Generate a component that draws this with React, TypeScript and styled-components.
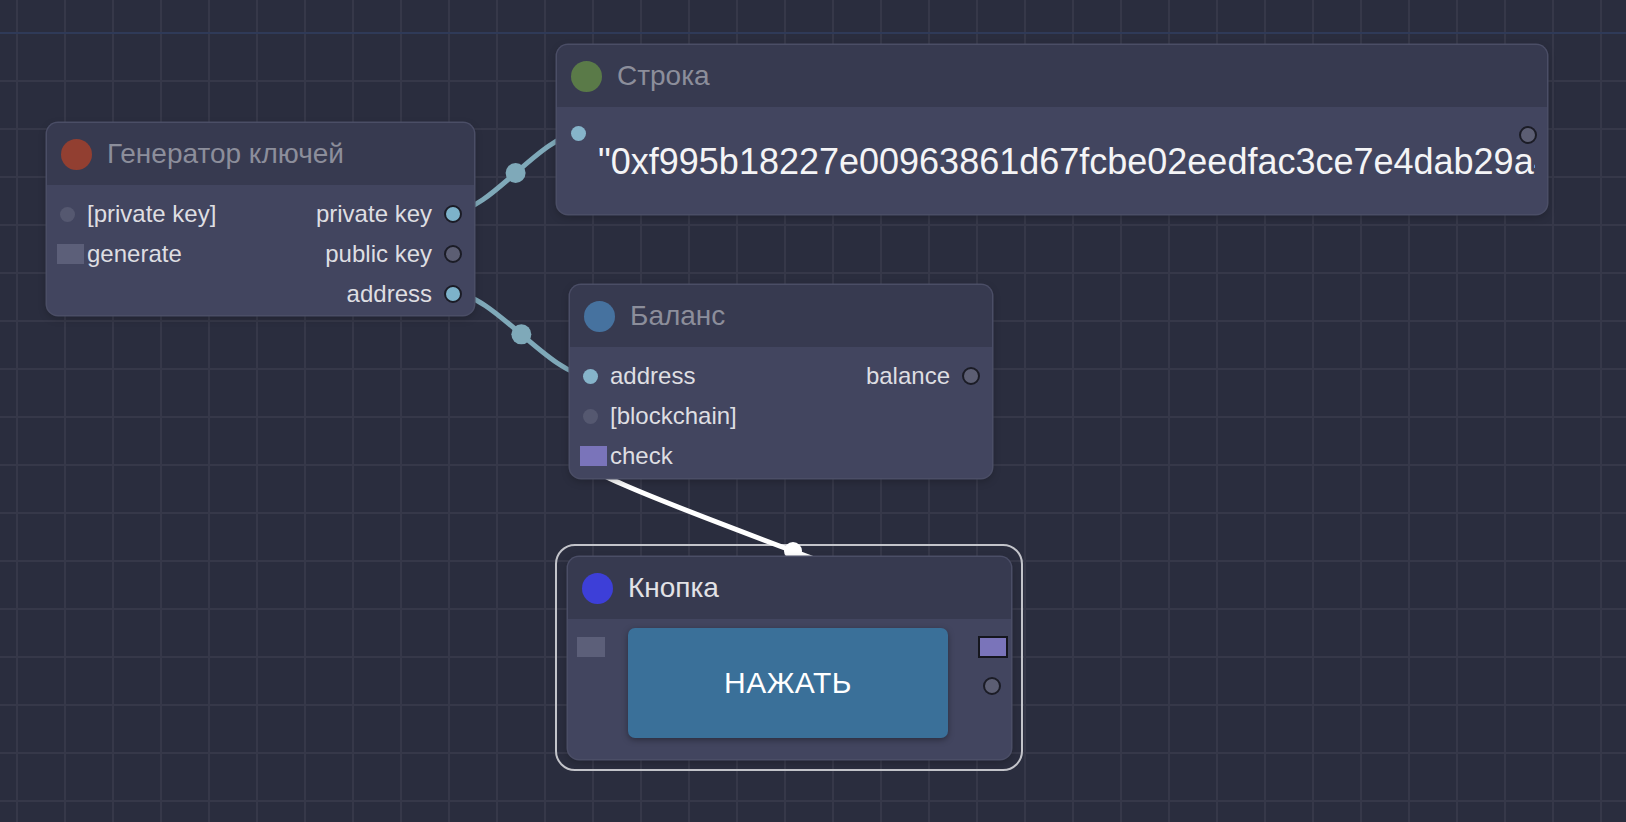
import React from "react";
import styled, { createGlobalStyle } from "styled-components";

const Global = createGlobalStyle`
  html, body { margin: 0; padding: 0; background: #2a2d3e; overflow: hidden; }
  body { font-family: "Liberation Sans", Arial, sans-serif; }
`;

const Canvas = styled.div`
  position: relative;
  width: 1626px;
  height: 822px;
  overflow: hidden;
  background-color: #2a2d3e;
  background-image:
    linear-gradient(#2f3a58, #2f3a58),
    linear-gradient(to right, #363849 0 2px, transparent 2px),
    linear-gradient(to bottom, #363849 0 2px, transparent 2px);
  background-size: 100% 2px, 48px 48px, 48px 48px;
  background-repeat: no-repeat, repeat, repeat;
  background-position: 0 32px, 16px 0, 0 32px;
`;

const LinkLayer = styled.svg`
  position: absolute;
  left: 0;
  top: 0;
  width: 1626px;
  height: 822px;
  z-index: 1;
  pointer-events: none;
`;

const SelectionFrame = styled.div<{ $x: number; $y: number; $w: number; $h: number }>`
  position: absolute;
  left: ${(p) => p.$x}px;
  top: ${(p) => p.$y}px;
  width: ${(p) => p.$w}px;
  height: ${(p) => p.$h}px;
  box-sizing: border-box;
  border: 2px solid #c3c4ca;
  border-radius: 20px;
  z-index: 0;
`;

const NodeBox = styled.div<{ $x: number; $y: number; $w: number }>`
  position: absolute;
  left: ${(p) => p.$x}px;
  top: ${(p) => p.$y}px;
  width: ${(p) => p.$w}px;
  z-index: 2;
  display: flex;
  flex-direction: column;
  border-radius: 11px;
  background: #42455f;
  box-shadow: 0 0 0 1.5px #4b4e66, 0 3px 8px rgba(0, 0, 0, 0.25);
  overflow: hidden;
`;

const Header = styled.div`
  height: 62px;
  flex: none;
  display: flex;
  align-items: center;
  gap: 15px;
  padding-left: 14px;
  background: #373a50;
`;

const HeadDot = styled.span<{ $c: string }>`
  width: 31px;
  height: 31px;
  border-radius: 50%;
  background: ${(p) => p.$c};
  flex: none;
`;

const Title = styled.span<{ $active?: boolean }>`
  font-size: 28px;
  color: ${(p) => (p.$active ? "#e2e2e6" : "#8c8e9b")};
  white-space: nowrap;
`;

const SlotBody = styled.div<{ $h: number }>`
  height: ${(p) => p.$h}px;
  box-sizing: border-box;
  padding-top: 9px;
  display: flex;
  flex-direction: column;
`;

const Row = styled.div`
  height: 40px;
  display: flex;
  align-items: center;
`;

const InSlot = styled.span`
  width: 30px;
  margin-left: 10px;
  display: flex;
  align-items: center;
  flex: none;
`;

const InDot = styled.span<{ $on?: boolean }>`
  width: 15px;
  height: 15px;
  border-radius: 50%;
  margin-left: 3px;
  background: ${(p) => (p.$on ? "#86b4ca" : "#555870")};
`;

const InSquare = styled.span<{ $c?: string }>`
  width: 27px;
  height: 20px;
  background: ${(p) => p.$c || "#5c5f79"};
`;

const Label = styled.span`
  font-size: 24px;
  color: #dedee2;
  white-space: nowrap;
`;

const Spacer = styled.span`
  flex: 1;
`;

const OutLabel = styled(Label)`
  margin-right: 12px;
`;

const OutDot = styled.span<{ $on?: boolean }>`
  width: 14px;
  height: 14px;
  border-radius: 50%;
  border: 2px solid #1b1c26;
  background: ${(p) => (p.$on ? "#7db2ca" : "#5c5e73")};
  margin-right: 12px;
  flex: none;
`;

/* ---- String node ---- */
const StringBody = styled.div`
  height: 107px;
  box-sizing: border-box;
  padding-top: 19px;
  display: flex;
  align-items: flex-start;
`;

const StringIn = styled.span`
  width: 15px;
  height: 15px;
  border-radius: 50%;
  background: #86b4ca;
  margin-left: 14px;
  margin-right: 12px;
  flex: none;
`;

const ValueText = styled.div`
  flex: 1;
  min-width: 0;
  margin-top: 17px;
  margin-right: -16px;
  overflow: hidden;
  white-space: nowrap;
  font-size: 36px;
  line-height: 38px;
  color: #f4f4f6;
`;

const StringOut = styled(OutDot)`
  margin-right: 10px;
`;

/* ---- Button node ---- */
const ButtonBody = styled.div`
  height: 140px;
  box-sizing: border-box;
  display: flex;
  align-items: flex-start;
  padding: 9px 0 0 9px;
`;

const ButtonIn = styled(InSquare)`
  width: 28px;
  margin-top: 9px;
  flex: none;
`;

const PressButton = styled.button`
  margin-left: 23px;
  width: 320px;
  height: 110px;
  flex: none;
  border: none;
  border-radius: 7px;
  background: #3a7099;
  color: #ffffff;
  font-family: "Liberation Sans", Arial, sans-serif;
  font-size: 30px;
  letter-spacing: 0.5px;
  box-shadow: 0 2px 6px rgba(0, 0, 0, 0.35);
  cursor: pointer;
`;

const OutColumn = styled.div`
  margin-left: auto;
  margin-right: 3px;
  display: flex;
  flex-direction: column;
  align-items: center;
`;

const OutSquare = styled.span`
  width: 26px;
  height: 18px;
  margin-top: 8px;
  border: 2px solid #15161e;
  background: #7a74ba;
`;

const ButtonOut = styled(OutDot)`
  margin: 19px 3px 0 0;
`;

type Pt = [number, number];

function bez(a: Pt, b: Pt) {
  const d = Math.hypot(b[0] - a[0], b[1] - a[1]) * 0.25;
  const c1: Pt = [a[0] + d, a[1]];
  const c2: Pt = [b[0] - d, b[1]];
  const path = `M${a[0]} ${a[1]} C${c1[0]} ${c1[1]} ${c2[0]} ${c2[1]} ${b[0]} ${b[1]}`;
  const mid: Pt = [
    0.125 * a[0] + 0.375 * c1[0] + 0.375 * c2[0] + 0.125 * b[0],
    0.125 * a[1] + 0.375 * c1[1] + 0.375 * c2[1] + 0.125 * b[1],
  ];
  return { path, mid };
}

const links: { a: Pt; b: Pt; color: string; r: number }[] = [
  { a: [452.7, 212], b: [578.5, 134], color: "#7fa9b9", r: 10 },
  { a: [452.7, 292.7], b: [590, 376], color: "#7fa9b9", r: 10 },
  { a: [993, 647], b: [593, 455], color: "#ffffff", r: 9 },
];

export default function App() {
  return (
    <>
      <Global />
      <Canvas>
        <SelectionFrame $x={555} $y={544} $w={468} $h={227} />
        <LinkLayer viewBox="0 0 1626 822">
          {links.map((l, i) => {
            const { path, mid } = bez(l.a, l.b);
            return (
              <g key={i}>
                <path d={path} fill="none" stroke={l.color} strokeWidth={5} strokeLinecap="round" />
                <circle cx={mid[0]} cy={mid[1]} r={l.r} fill={l.color} />
              </g>
            );
          })}
        </LinkLayer>

        <NodeBox $x={47} $y={123} $w={427}>
          <Header>
            <HeadDot $c="#923f31" />
            <Title>Генератор ключей</Title>
          </Header>
          <SlotBody $h={130}>
            <Row>
              <InSlot><InDot /></InSlot>
              <Label>[private key]</Label>
              <Spacer />
              <OutLabel>private key</OutLabel>
              <OutDot $on />
            </Row>
            <Row>
              <InSlot><InSquare /></InSlot>
              <Label>generate</Label>
              <Spacer />
              <OutLabel>public key</OutLabel>
              <OutDot />
            </Row>
            <Row>
              <Spacer />
              <OutLabel>address</OutLabel>
              <OutDot $on />
            </Row>
          </SlotBody>
        </NodeBox>

        <NodeBox $x={557} $y={45} $w={990}>
          <Header>
            <HeadDot $c="#5a7a48" />
            <Title>Строка</Title>
          </Header>
          <StringBody>
            <StringIn />
            <ValueText>"0xf995b18227e00963861d67fcbe02eedfac3ce7e4dab29a4c81e0f3b9d27a65e1"</ValueText>
            <StringOut />
          </StringBody>
        </NodeBox>

        <NodeBox $x={570} $y={285} $w={422}>
          <Header>
            <HeadDot $c="#46729f" />
            <Title>Баланс</Title>
          </Header>
          <SlotBody $h={131}>
            <Row>
              <InSlot><InDot $on /></InSlot>
              <Label>address</Label>
              <Spacer />
              <OutLabel>balance</OutLabel>
              <OutDot />
            </Row>
            <Row>
              <InSlot><InDot /></InSlot>
              <Label>[blockchain]</Label>
            </Row>
            <Row>
              <InSlot><InSquare $c="#7a74ba" /></InSlot>
              <Label>check</Label>
            </Row>
          </SlotBody>
        </NodeBox>

        <NodeBox $x={568} $y={557} $w={443}>
          <Header>
            <HeadDot $c="#3d3fd8" />
            <Title $active>Кнопка</Title>
          </Header>
          <ButtonBody>
            <ButtonIn />
            <PressButton>НАЖАТЬ</PressButton>
            <OutColumn>
              <OutSquare />
              <ButtonOut />
            </OutColumn>
          </ButtonBody>
        </NodeBox>
      </Canvas>
    </>
  );
}
